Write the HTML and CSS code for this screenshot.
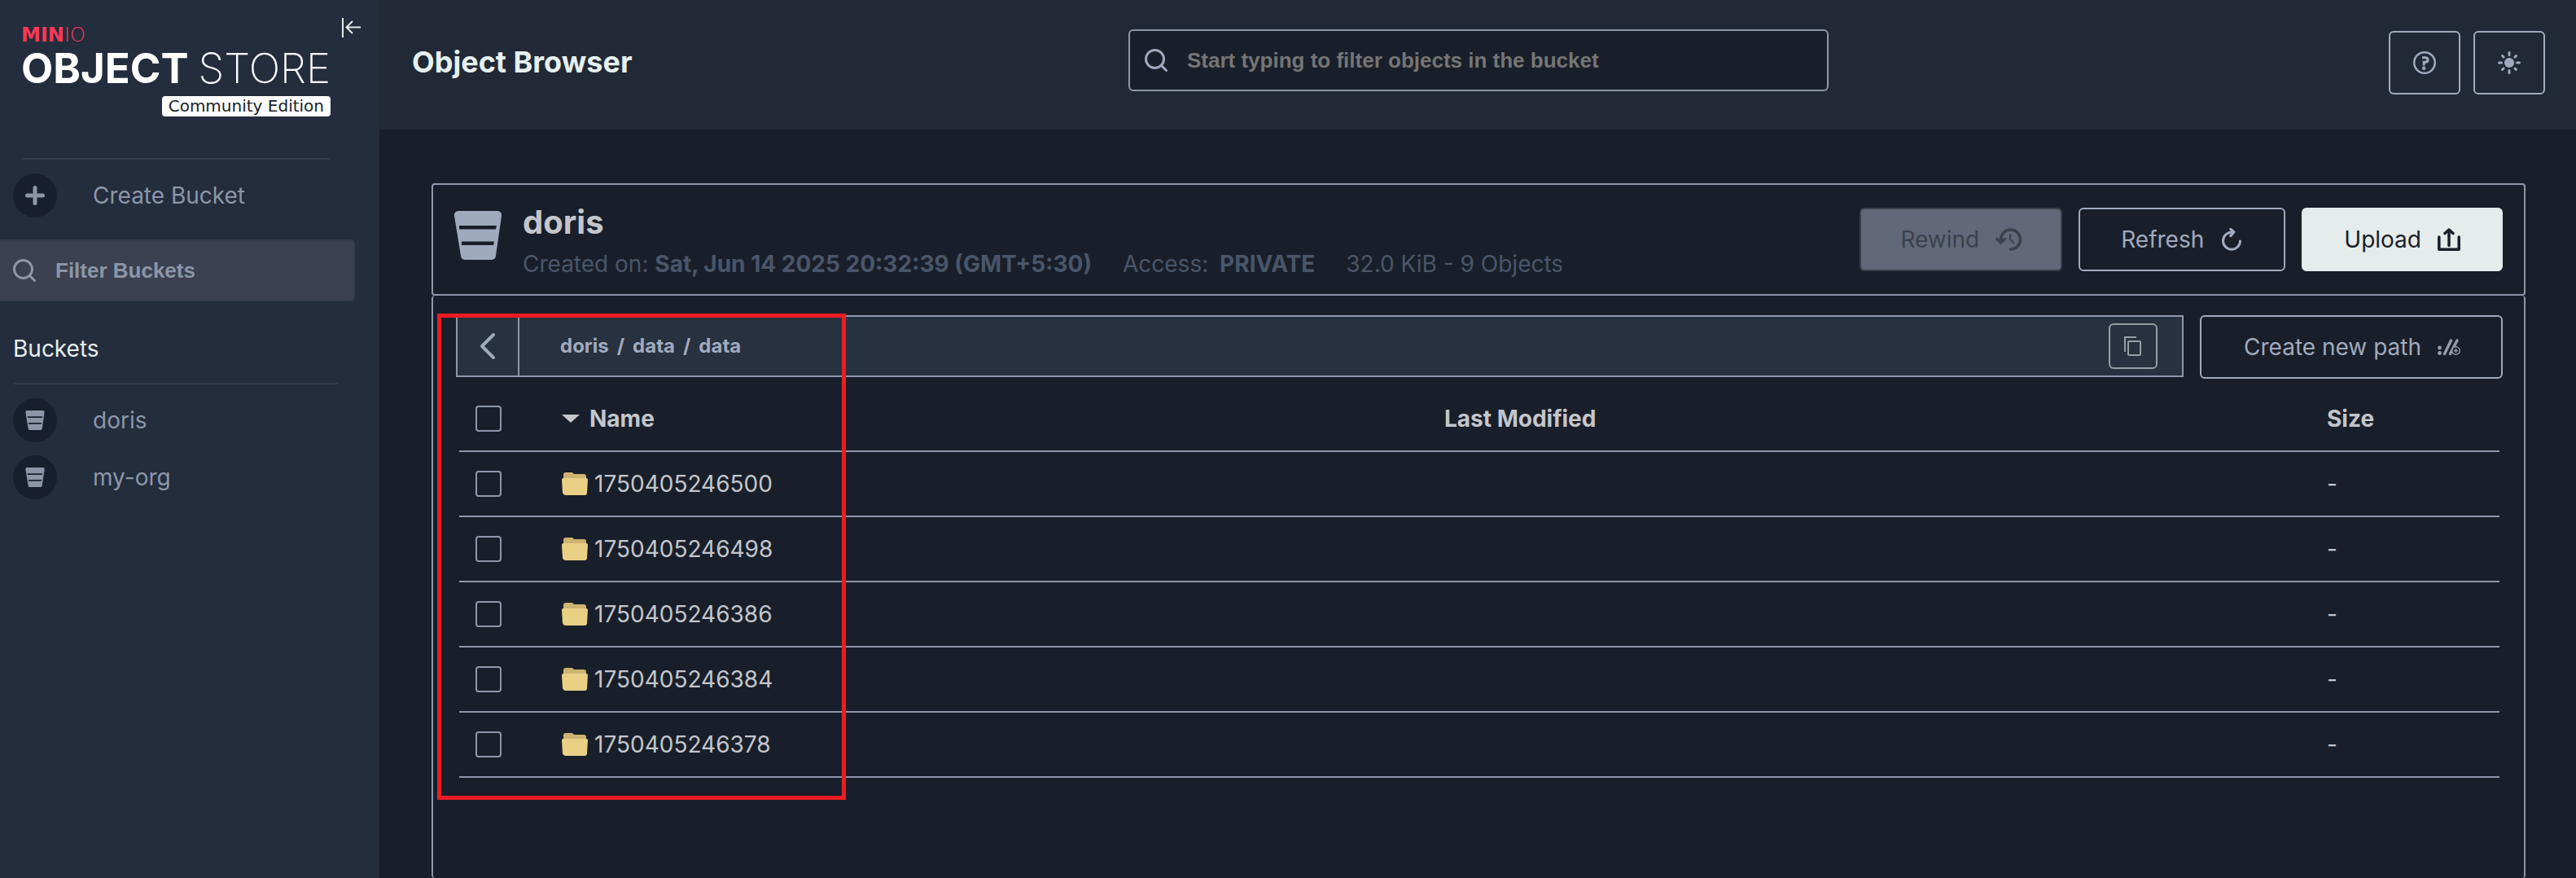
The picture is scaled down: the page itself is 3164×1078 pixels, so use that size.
FILE: index.html
```html
<!DOCTYPE html>
<html lang="en">
<head>
<meta charset="utf-8">
<title>MinIO Object Store</title>
<link rel="stylesheet" href="styles.css">
</head>
<body>
<svg width="0" height="0" class="sprite" aria-hidden="true">
  <symbol id="bucket" viewBox="0 0 58 60">
    <path fill="currentColor" fill-rule="evenodd" d="M5 0H53a5 5 0 0 1 5 6L51 55a5 5 0 0 1-5 5H13a5 5 0 0 1-5-5L0 6A5 5 0 0 1 5 0ZM6 18v4.500H51L52 18ZM9 37.500V42H48L49 37.500Z"/>
  </symbol>
  <symbol id="search" viewBox="0 0 28 28">
    <circle cx="12.500" cy="12.500" r="11" fill="none" stroke="currentColor" stroke-width="3"/>
    <path d="M20 20l6.500 6.500" stroke="currentColor" stroke-width="3" stroke-linecap="round"/>
  </symbol>
  <symbol id="folder" viewBox="0 0 32 28">
    <path fill="#ccb371" d="M2 8V3Q2 0 5 0H12Q14 0 15 2H27Q30 2 30 5V8Z"/>
    <path fill="#e8d185" d="M2 7H30Q32 7 32 9L31 25Q31 28 28 28H5Q2 28 1 25L0 9Q0 7 2 7Z"/>
  </symbol>
</svg>
<div class="app">
  <aside class="sidebar">
    <div class="brand">
      <div class="logo">
        <div class="logo-maker">MIN<span>IO</span></div>
        <div class="logo-name"><b>OBJECT</b><span>STORE</span></div>
        <div class="edition">Community Edition</div>
      </div>
      <button class="collapse" aria-label="Collapse menu">
        <svg width="24" height="24" viewBox="0 0 24 24" fill="none" stroke="currentColor" stroke-width="2"><path d="M1 0V24M23 11.500H6M13 4L5.500 11.500L13 19"/></svg>
      </button>
    </div>
    <a class="nav-item" href="#create"><span class="nav-icon"><svg width="24" height="24" viewBox="0 0 24 24"><path d="M12 2.500V21.500M2.500 12H21.500" stroke="currentColor" stroke-width="5" stroke-linecap="round"/></svg></span>Create Bucket</a>
    <label class="filter">
      <svg width="28" height="28"><use href="#search"/></svg>
      <input type="text" placeholder="Filter Buckets" aria-label="Filter Buckets">
    </label>
    <h2 class="section-title">Buckets</h2>
    <nav class="bucket-list">
      <a class="nav-item" href="#doris"><span class="nav-icon"><svg width="24" height="24"><use href="#bucket"/></svg></span>doris</a>
      <a class="nav-item" href="#my-org"><span class="nav-icon"><svg width="24" height="24"><use href="#bucket"/></svg></span>my-org</a>
    </nav>
  </aside>
  <div class="content">
    <header class="topbar">
      <h1 class="page-title">Object Browser</h1>
      <label class="search">
        <svg width="28" height="28"><use href="#search"/></svg>
        <input type="text" placeholder="Start typing to filter objects in the bucket" aria-label="Filter objects">
      </label>
      <div class="top-actions">
        <button class="btn icon-btn" aria-label="Help">
          <svg width="28" height="28" viewBox="0 0 28 28" fill="none" stroke="currentColor"><circle cx="14" cy="14" r="12.750" stroke-width="2.500"/><path d="M11 7.800H15Q18 8 18 10.500T15.500 13.200H13.200V17.500" stroke-width="3"/><circle cx="13.200" cy="20.800" r="1.200" stroke-width="2"/></svg>
        </button>
        <button class="btn icon-btn" aria-label="Toggle theme">
          <svg width="28" height="28" viewBox="0 0 28 28" stroke="currentColor" stroke-width="3" stroke-linecap="round"><circle cx="14" cy="14" r="6" fill="currentColor" stroke="none"/><path d="M14 1.500V4.500M14 23.500V26.500M1.500 14H4.500M23.500 14H26.500M5.500 5.500L7 7M21 21L22.500 22.500M5.500 22.500L7 21M21 7L22.500 5.500"/></svg>
        </button>
      </div>
    </header>
    <main class="main">
      <section class="bucket-head">
        <svg class="bucket-logo" width="58" height="60"><use href="#bucket"/></svg>
        <div class="bucket-info">
          <h2 class="bucket-name">doris</h2>
          <div class="bucket-meta">
            <span>Created on: <b>Sat, Jun 14 2025 20:32:39 (GMT+5:30)</b></span>
            <span class="access">Access: <b>PRIVATE</b></span>
            <span>32.0 KiB - 9 Objects</span>
          </div>
        </div>
        <div class="bucket-actions">
          <button class="btn rewind" disabled>Rewind
            <svg width="32" height="28" viewBox="0 0 32 28" fill="none" stroke="currentColor" stroke-width="3.500" stroke-linecap="round"><path d="M6.500 17V14A12 12 0 1 1 18.500 26"/><path d="M18 8V14L22.500 18.500" stroke-width="2"/><path d="M2 13.500L6.500 18L11.500 13.500" stroke-linejoin="round"/></svg>
          </button>
          <button class="btn">Refresh
            <svg width="28" height="28" viewBox="0 0 28 28" fill="none" stroke="currentColor" stroke-width="3" stroke-linecap="round"><path d="M16 5.200H13.500A10.500 10.500 0 1 0 24.500 16"/><path d="M13 1.500L16.500 5L13 9.500" stroke-width="3.500"/></svg>
          </button>
          <button class="btn upload">Upload
            <svg width="28" height="28" viewBox="0 0 28 28" fill="none" stroke="currentColor" stroke-width="3.500" stroke-linecap="round" stroke-linejoin="round"><path d="M1.800 11V26.200H26.200V11M14 21.500V3M9 6.500L14 2L19 6.500"/></svg>
          </button>
        </div>
      </section>
      <section class="browser">
        <div class="path-row">
          <div class="path-bar">
            <button class="back" aria-label="Back"><svg width="20" height="34" viewBox="0 0 20 34" fill="none" stroke="currentColor" stroke-width="4" stroke-linecap="round" stroke-linejoin="round"><path d="M17 3L3 17L17 31"/></svg></button>
            <nav class="crumbs"><a href="#doris">doris</a><span>/</span><a href="#data">data</a><span>/</span><a href="#sub">data</a></nav>
            <button class="btn copy" aria-label="Copy path"><svg width="24" height="24" viewBox="0 0 24 24" fill="none" stroke="currentColor" stroke-width="2"><path d="M2 19V1H16"/><rect x="6" y="6" width="15" height="17" rx="1"/></svg></button>
          </div>
          <button class="btn create-path">Create new path
            <svg width="28" height="28" viewBox="0 0 28 28" fill="none" stroke="#969ca8"><circle cx="2.500" cy="15" r="2.400" fill="#969ca8" stroke="none"/><circle cx="2.500" cy="21.500" r="2.400" fill="#969ca8" stroke="none"/><path d="M8.500 22.500L16.500 6M15.500 22.500L24 6" stroke-width="3.500" stroke-linecap="round"/><circle cx="22.500" cy="18.500" r="4.700" stroke-width="1.500" fill="#191f2a"/><path d="M22.500 16V21M20 18.500H25" stroke-width="1.500"/></svg>
          </button>
        </div>
        <table class="objects">
          <colgroup><col class="col-check"><col><col><col class="col-size"></colgroup>
          <thead>
            <tr><th><input type="checkbox" aria-label="Select all"></th><th><span class="cell sorted"><svg width="22" height="10" viewBox="0 0 22 10"><path d="M0 0H22L11 10Z" fill="currentColor"/></svg>Name</span></th><th>Last Modified</th><th>Size</th></tr>
          </thead>
          <tbody>
            <tr><td><input type="checkbox" aria-label="Select 1750405246500"></td><td><span class="cell"><svg width="32" height="28"><use href="#folder"/></svg>1750405246500</span></td><td></td><td>-</td></tr>
            <tr><td><input type="checkbox" aria-label="Select 1750405246498"></td><td><span class="cell"><svg width="32" height="28"><use href="#folder"/></svg>1750405246498</span></td><td></td><td>-</td></tr>
            <tr><td><input type="checkbox" aria-label="Select 1750405246386"></td><td><span class="cell"><svg width="32" height="28"><use href="#folder"/></svg>1750405246386</span></td><td></td><td>-</td></tr>
            <tr><td><input type="checkbox" aria-label="Select 1750405246384"></td><td><span class="cell"><svg width="32" height="28"><use href="#folder"/></svg>1750405246384</span></td><td></td><td>-</td></tr>
            <tr><td><input type="checkbox" aria-label="Select 1750405246378"></td><td><span class="cell"><svg width="32" height="28"><use href="#folder"/></svg>1750405246378</span></td><td></td><td>-</td></tr>
          </tbody>
        </table>
        <div class="highlight"></div>
      </section>
    </main>
  </div>
</div>
</body>
</html>
```
FILE: styles.css
```css
* { box-sizing: border-box; }
body {
  margin: 0;
  background: #191f2a;
  color: #c4c6cc;
  font-family: Inter, "Liberation Sans", sans-serif;
  font-size: 28px;
  line-height: 36px;
}
h1, h2 { margin: 0; }
a { color: inherit; text-decoration: none; }
button, input { font: inherit; color: inherit; margin: 0; }
svg { display: block; flex: none; }
.sprite { position: absolute; }

.app { display: flex; min-height: 100vh; }

.sidebar { flex: 0 0 466px; background: #242d3d; color: #8c96a8; }
.brand {
  display: flex;
  justify-content: space-between;
  margin: 0 22px 17px 26px;
}
.logo {
  display: flex;
  flex-direction: column;
  width: 380px;
  height: 196px;
  padding-top: 30px;
  border-bottom: 2px solid #323b4c;
}
.logo-maker {
  color: #ff3756;
  font-family: "DejaVu Sans", sans-serif;
  font-size: 24px;
  font-weight: 700;
  line-height: 26px;
}
.logo-maker span { font-weight: 200; }
.logo-name {
  display: flex;
  justify-content: space-between;
  color: #fff;
  font-size: 51px;
  line-height: 56px;
}
.logo-name span { font-weight: 200; }
.edition {
  align-self: flex-end;
  margin-top: 6px;
  padding: 0 8px;
  border-radius: 4px;
  background: #fff;
  color: #191f2a;
  font-family: "DejaVu Sans", sans-serif;
  font-size: 20px;
  line-height: 25px;
}
.collapse {
  align-self: flex-start;
  margin-top: 22px;
  padding: 0;
  border: 0;
  background: none;
  color: #e6ebeb;
}
.nav-item { display: flex; align-items: center; gap: 44px; padding-left: 16px; }
.nav-icon {
  display: flex;
  align-items: center;
  justify-content: center;
  width: 54px;
  height: 54px;
  border-radius: 50%;
  background: #171f2f;
}
.filter {
  display: flex;
  align-items: center;
  gap: 24px;
  height: 76px;
  margin: 27px 30px 36px 0;
  padding-left: 16px;
  border: 2px solid #343d4e;
  border-left: 0;
  border-radius: 0 6px 6px 0;
  background: #3b4151;
}
.filter input, .search input {
  flex: 1;
  min-width: 0;
  padding: 0;
  border: 0;
  outline: 0;
  background: none;
  font-family: "Liberation Sans", sans-serif;
  font-size: 26px;
  font-weight: 700;
}
.filter input::placeholder { color: #8c96a8; }
.section-title {
  height: 66px;
  margin: 0 50px 17px 16px;
  padding-top: 4px;
  border-bottom: 2px solid #323b4c;
  color: #e6f0f0;
  font-size: 28px;
  font-weight: 400;
}
.bucket-list { display: flex; flex-direction: column; gap: 16px; }

.content { flex: 1; min-width: 0; display: flex; flex-direction: column; }
.topbar {
  display: grid;
  grid-template-columns: 1fr 860px 1fr;
  height: 159px;
  padding: 36px 38px 0 40px;
  background: #222936;
}
.page-title { color: #e6f0f0; font-size: 36px; line-height: 80px; }
.search {
  display: flex;
  align-items: center;
  gap: 24px;
  height: 76px;
  padding: 0 18px;
  border: 2px solid #8e97aa;
  border-radius: 6px;
  background: #191f2a;
  color: #a0aabe;
}
.search input::placeholder { color: #757575; }
.top-actions { display: flex; justify-content: flex-end; gap: 16px; padding-top: 2px; }

.btn {
  display: flex;
  align-items: center;
  gap: 20px;
  height: 78px;
  padding: 0 50px;
  border: 2px solid #a0aabe;
  border-radius: 6px;
  background: none;
  color: #a0aabe;
  white-space: nowrap;
}
.icon-btn { justify-content: center; width: 88px; padding: 0; }
.rewind { padding: 0 48px; border-color: #3b414d; background: #616879; color: #3b414d; }
.upload { border-color: #e6ebeb; background: #e6ebeb; color: #191f2a; }
.create-path { padding: 0 50px 0 52px; }

.main { flex: 1; display: flex; flex-direction: column; padding: 66px 62px 0 64px; }
.bucket-head {
  display: flex;
  align-items: center;
  gap: 26px;
  height: 138px;
  padding: 0 26px;
  border: 2px solid #8e97aa;
  border-radius: 4px;
}
.bucket-logo { color: #a0aabe; margin-bottom: 10px; }
.bucket-info { flex: 1; padding-top: 2px; color: #49566a; }
.bucket-name { margin-bottom: 8px; color: #c4c6cc; font-size: 40px; line-height: 50px; }
.bucket-meta { display: flex; gap: 38px; }
.access b { margin-left: 6px; }
.bucket-actions { display: flex; gap: 20px; }

.browser {
  position: relative;
  flex: 1;
  padding: 24px 26px 0 28px;
  border: 2px solid #8e97aa;
  border-width: 0 2px;
  border-radius: 4px;
}
.path-row { display: flex; align-items: flex-start; gap: 20px; }
.path-bar {
  flex: 1;
  display: flex;
  align-items: center;
  height: 76px;
  padding-right: 30px;
  border: 2px solid #8e97aa;
  background: #28313f;
  color: #a0aabe;
}
.back {
  display: flex;
  align-items: center;
  justify-content: center;
  align-self: stretch;
  width: 76px;
  padding: 0;
  border: 0;
  border-right: 2px solid #8e97aa;
  background: none;
}
.crumbs { flex: 1; display: flex; gap: 10px; padding-left: 50px; font-size: 24px; font-weight: 700; }
.copy { justify-content: center; width: 60px; height: 56px; padding: 0; border-color: #959ea3; color: #959ea3; }

.objects { width: calc(100% - 8px); margin: 9px 4px 0; border-collapse: collapse; table-layout: fixed; }
.objects th, .objects td { height: 80px; padding: 0; border-bottom: 2px solid #8e97aa; text-align: left; }
.objects th:first-child, .objects td:first-child { padding-left: 20px; }
.col-check { width: 126px; }
.col-size { width: 212px; }
.cell { display: flex; align-items: center; gap: 8px; }
.sorted { gap: 12px; }
.objects input {
  display: block;
  appearance: none;
  width: 32px;
  height: 32px;
  border: 2px solid #8e97aa;
  border-radius: 4px;
}

.highlight {
  position: absolute;
  left: 5px;
  top: 22px;
  width: 502px;
  height: 597px;
  border: 5px solid #ed1c24;
  pointer-events: none;
}
```
